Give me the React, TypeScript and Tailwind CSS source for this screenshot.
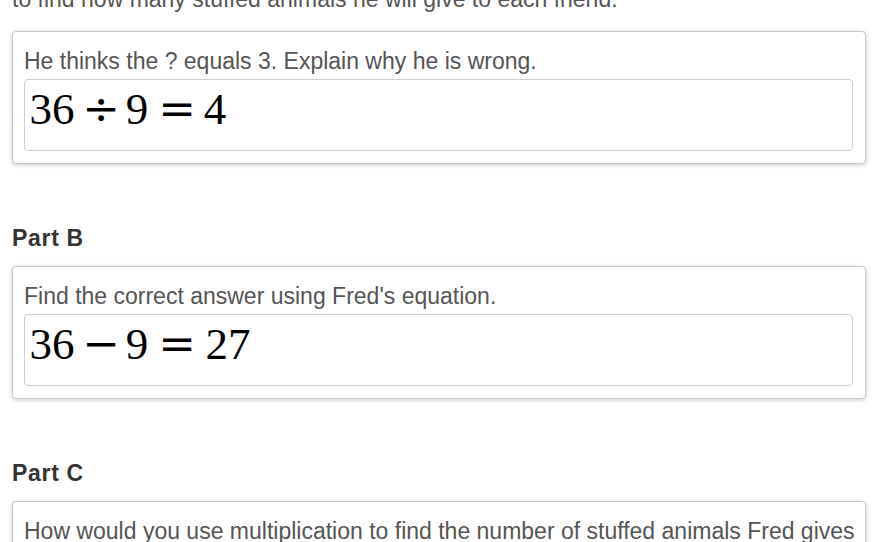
import React from 'react';

type Token = { text: string; w: number; op?: boolean };

interface Part {
  heading?: string;
  prompt: string;
  math?: Token[];
}

const parts: Part[] = [
  {
    prompt: 'He thinks the ? equals 3. Explain why he is wrong.',
    math: [
      { text: '36', w: 40 },
      { text: '÷', w: 58, op: true },
      { text: '9', w: 14 },
      { text: '=', w: 66, op: true },
      { text: '4', w: 10 },
    ],
  },
  {
    heading: 'Part B',
    prompt: "Find the correct answer using Fred's equation.",
    math: [
      { text: '36', w: 40 },
      { text: '−', w: 58, op: true },
      { text: '9', w: 14 },
      { text: '=', w: 66, op: true },
      { text: '27', w: 36 },
    ],
  },
  {
    heading: 'Part C',
    prompt: 'How would you use multiplication to find the number of stuffed animals Fred gives',
  },
];

const MathLine: React.FC<{ tokens: Token[] }> = ({ tokens }) => (
  <div className="flex items-baseline pl-[7px] pt-[7px] text-[45px] leading-[44px] text-black">
    {tokens.map((t, i) => (
      <span
        key={i}
        className={`inline-flex justify-center whitespace-nowrap ${
          t.op ? "font-['DejaVu_Serif',serif]" : "font-['Liberation_Serif',serif]"
        }`}
        style={{ width: t.w }}
      >
        {t.text}
      </span>
    ))}
  </div>
);

const PartCard: React.FC<{ part: Part }> = ({ part }) => (
  <div className="bg-white border border-[#c8c8c8] rounded-[4px] shadow-[0_1px_4px_rgba(0,0,0,0.22)] pt-[15px] pb-[12px] pl-[11px] pr-[12px]">
    <p className="text-[23px] leading-[28px] text-[#555] whitespace-nowrap">{part.prompt}</p>
    {part.math && (
      <div className="mt-[4px] h-[72px] border border-[#cdcdcd] rounded-[4px] bg-white">
        <MathLine tokens={part.math} />
      </div>
    )}
  </div>
);

export default function App() {
  return (
    <div className="h-[542px] overflow-hidden bg-white font-['Liberation_Sans',Arial,sans-serif]">
      <div className="pl-[12px] pr-[14px]">
        <p className="mt-[-17px] h-[32px] text-[23px] leading-[32px] text-[#555] whitespace-nowrap">
          to find how many stuffed animals he will give to each friend.
        </p>
        <div className="mt-[16px]">
          {parts.map((part, i) => (
            <div key={i}>
              {part.heading && (
                <h3 className="mt-[60px] mb-[14px] text-[23px] leading-[28px] font-bold text-[#333] tracking-[0.03em]">
                  {part.heading}
                </h3>
              )}
              <PartCard part={part} />
            </div>
          ))}
        </div>
      </div>
    </div>
  );
}
